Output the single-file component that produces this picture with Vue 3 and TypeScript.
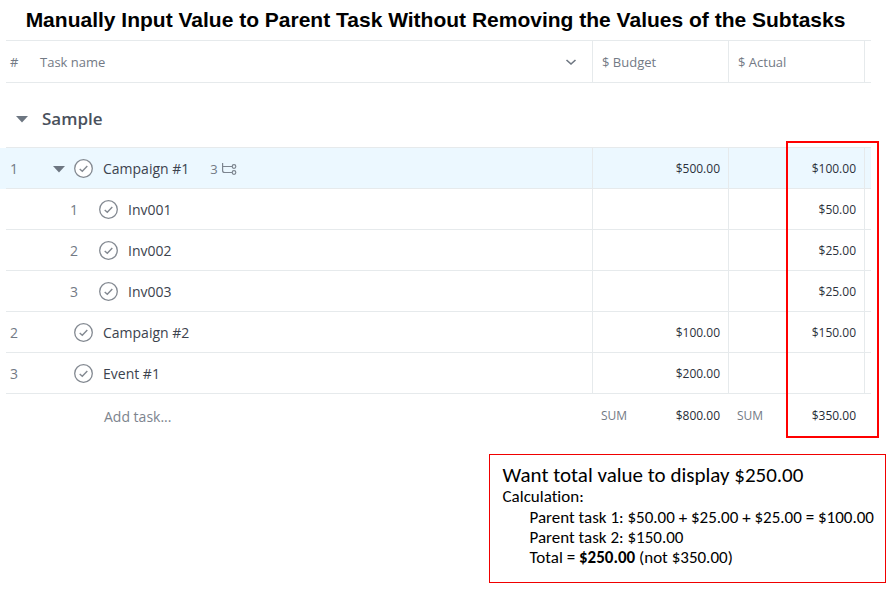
<script setup lang="ts">
interface Task {
  id: string
  order: number
  name: string
  budget: string
  actual: string
  sub?: boolean
  children?: number
}

const tasks: Task[] = [
  { id: 'c1', order: 1, name: 'Campaign #1', budget: '$500.00', actual: '$100.00', children: 3 },
  { id: 'i1', order: 1, name: 'Inv001', budget: '', actual: '$50.00', sub: true },
  { id: 'i2', order: 2, name: 'Inv002', budget: '', actual: '$25.00', sub: true },
  { id: 'i3', order: 3, name: 'Inv003', budget: '', actual: '$25.00', sub: true },
  { id: 'c2', order: 2, name: 'Campaign #2', budget: '$100.00', actual: '$150.00' },
  { id: 'e1', order: 3, name: 'Event #1', budget: '$200.00', actual: '' },
]
</script>

<template>
  <main class="page">
    <h1 class="title">Manually Input Value to Parent Task Without Removing the Values of the Subtasks</h1>

    <div class="sheet">
      <table class="grid">
        <colgroup>
          <col class="col-num" />
          <col />
          <col class="col-money" />
          <col class="col-money" />
          <col class="col-tail" />
        </colgroup>
        <thead>
          <tr class="head">
            <th class="num">#</th>
            <th>
              <div class="head-name">
                <span>Task name</span>
                <button class="icon-btn" type="button" aria-label="Task name options">
                  <svg width="12" height="12" viewBox="0 0 12 12">
                    <path d="M1.5 4 6 8 10.5 4" fill="none" stroke="#6f7782" stroke-width="1.6" />
                  </svg>
                </button>
              </div>
            </th>
            <th class="money">$ Budget</th>
            <th class="money">$ Actual</th>
            <th class="tail"></th>
          </tr>
        </thead>
        <tbody>
          <tr class="group">
            <td colspan="5">
              <div class="group-name">
                <button class="icon-btn" type="button" aria-label="Collapse Sample">
                  <svg width="12" height="8" viewBox="0 0 12 8"><path d="M0 1h12L6 7.5z" fill="#6d7681" /></svg>
                </button>
                <h2>Sample</h2>
              </div>
            </td>
          </tr>
          <tr v-for="task in tasks" :key="task.id" class="task" :class="{ selected: task.children }">
            <td class="num">{{ task.sub ? '' : task.order }}</td>
            <td>
              <div class="task-name" :class="{ sub: task.sub }">
                <span class="lead">
                  <template v-if="task.sub">{{ task.order }}</template>
                  <button v-else-if="task.children" class="icon-btn" type="button" aria-label="Collapse subtasks">
                    <svg width="12" height="8" viewBox="0 0 12 8"><path d="M0 1h12L6 7.5z" fill="#6d7681" /></svg>
                  </button>
                </span>
                <button class="icon-btn" type="button" :aria-label="'Complete ' + task.name">
                  <svg width="20" height="20" viewBox="0 0 20 20" fill="none" stroke="#838991">
                    <circle cx="9.5" cy="9.5" r="8.8" fill="#fff" stroke-width="1.3" />
                    <path d="m5.7 9.9 2.6 2.4L13.3 7" stroke-width="1.4" />
                  </svg>
                </button>
                <span class="label">{{ task.name }}</span>
                <span v-if="task.children" class="children">
                  {{ task.children }}
                  <svg width="15" height="12" viewBox="0 0 15 12" fill="none" stroke="#7d858f" stroke-width="1.2">
                    <path d="M.6 0v7.5q0 2 2 2h7.6M.6 3.5h9.6" />
                    <circle cx="12" cy="3.5" r="1.8" />
                    <circle cx="12" cy="9.5" r="1.8" />
                  </svg>
                </span>
              </div>
            </td>
            <td class="money value">{{ task.budget }}</td>
            <td class="money value">{{ task.actual }}</td>
            <td class="tail"></td>
          </tr>
        </tbody>
        <tfoot>
          <tr class="foot">
            <td></td>
            <td><button class="add" type="button">Add task...</button></td>
            <td><div class="sum"><span>SUM</span><strong>$800.00</strong></div></td>
            <td><div class="sum"><span>SUM</span><strong>$350.00</strong></div></td>
            <td></td>
          </tr>
        </tfoot>
      </table>
      <div class="highlight"></div>
    </div>

    <aside class="note">
      <p class="want">Want total value to display $250.00</p>
      <p class="calc">Calculation:</p>
      <ul>
        <li>Parent task 1: $50.00 + $25.00 + $25.00 = $100.00</li>
        <li>Parent task 2: $150.00</li>
        <li>Total = <b>$250.00</b> (not $350.00)</li>
      </ul>
    </aside>
  </main>
</template>

<style>
body {
  margin: 0;
  background: #fff;
}
</style>

<style scoped>
.page {
  color: #000;
}
.title {
  margin: 0;
  height: 40px;
  padding-right: 22px;
  box-sizing: border-box;
  font: bold 21px/40px "Liberation Sans", Arial, sans-serif;
  text-align: center;
  white-space: nowrap;
}
.sheet {
  position: relative;
  margin: 0 22px 0 6px;
  font-family: "Open Sans", "Noto Sans", sans-serif;
}
.grid {
  width: 100%;
  table-layout: fixed;
  border-collapse: separate;
  border-spacing: 0;
  font-size: 14px;
  line-height: 20px;
  color: #737a85;
}
.col-num {
  width: 34px;
}
.col-money {
  width: 136px;
}
.col-tail {
  width: 7px;
}
th,
td {
  box-sizing: border-box;
  padding: 0;
  text-align: left;
  font-weight: 400;
  vertical-align: middle;
}
.head th {
  height: 43px;
  font-size: 13px;
  border-top: 1px solid #e6eaec;
  border-bottom: 1px solid #e6eaec;
}
.head .num,
.task .num {
  padding-left: 4px;
}
.head .money,
.task .money,
.tail {
  border-left: 1px solid #e6eaec;
}
.money {
  padding: 0 8px 0 9px;
}
.head-name {
  display: flex;
  align-items: center;
  justify-content: space-between;
  padding-right: 15px;
}
.icon-btn {
  display: block;
  padding: 0;
  border: 0;
  background: none;
}
.icon-btn svg {
  display: block;
}
.group td {
  height: 65px;
  padding-top: 8px;
  border-bottom: 1px solid #e6eaec;
}
.group-name {
  display: flex;
  align-items: center;
  gap: 14px;
  padding-left: 10px;
}
.group h2 {
  margin: 0;
  font-size: 17px;
  line-height: 24px;
  font-weight: 600;
  color: #4a515c;
}
.task td {
  height: 41px;
  padding-top: 2px;
  border-bottom: 1px solid #e6eaec;
}
.selected td {
  background: #ecf8ff;
}
.selected .num {
  box-shadow: -6px 0 0 #ecf8ff;
}
.task-name {
  display: flex;
  align-items: center;
  padding-left: 13px;
}
.task-name.sub {
  padding-left: 30px;
}
.lead {
  width: 21px;
}
.sub .lead {
  width: 29px;
}
.label {
  margin-left: 9px;
  color: #3c434e;
}
.children {
  display: flex;
  align-items: center;
  gap: 4px;
  margin-left: 21px;
  font-size: 13px;
}
.task .value {
  font-size: 12px;
  text-align: right;
  color: #2b313b;
}
.foot td {
  height: 43px;
}
.add {
  display: block;
  margin-left: 64px;
  padding: 3px 0 0;
  border: 0;
  background: none;
  font: inherit;
  color: #7d848e;
}
.sum {
  display: flex;
  justify-content: space-between;
  padding: 0 8px 0 9px;
  font-size: 12px;
}
.sum strong {
  font-weight: 500;
  color: #262c35;
}
.highlight {
  position: absolute;
  top: 101px;
  right: -8px;
  bottom: -1px;
  width: 93px;
  box-sizing: border-box;
  border: 2px solid #f00;
  pointer-events: none;
}
.note {
  box-sizing: border-box;
  width: max-content;
  min-width: 397px;
  margin: 17px 7px 0 auto;
  padding: 8px 11px 14px 13px;
  border: 1px solid #f00000;
  font: 17px/20px Carlito, Lato, sans-serif;
  font-variant-ligatures: none;
}
.note p,
.note ul {
  margin: 0;
  padding: 0;
  list-style: none;
}
.note .want {
  font-size: 21px;
  line-height: 24px;
}
.note ul {
  padding: 1px 0 0 27px;
}
</style>
